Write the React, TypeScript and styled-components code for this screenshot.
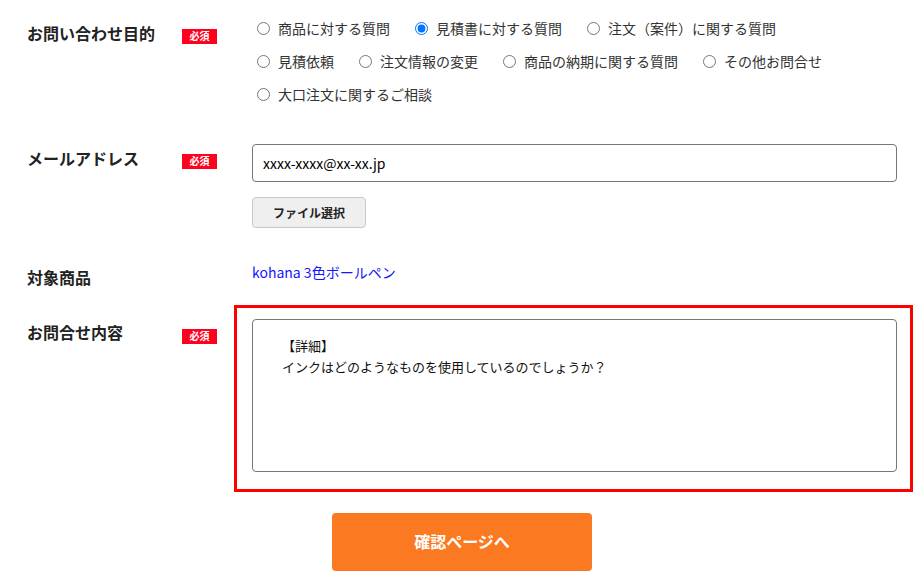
import React from "react";
import styled, { createGlobalStyle } from "styled-components";

const GlobalStyle = createGlobalStyle`
  html, body { margin: 0; padding: 0; background: #fff; }
  body {
    font-family: "Noto Sans CJK JP", "Noto Sans", sans-serif;
    color: #333;
  }
  * { box-sizing: border-box; }
`;

const Page = styled.form`
  width: 924px;
  padding-top: 12px;
  padding-bottom: 20px;
`;

const Row = styled.div<{ $top: number }>`
  display: grid;
  grid-template-columns: 155px 70px 645px;
  align-items: start;
  padding-left: 27px;
  margin-top: ${(p) => p.$top}px;
`;

const Label = styled.div<{ $offset: number }>`
  margin-top: ${(p) => p.$offset}px;
  font-size: 16px;
  line-height: 24px;
  font-weight: 700;
  color: #222;
  white-space: nowrap;
`;

const BadgeCell = styled.div<{ $offset: number }>`
  padding-top: ${(p) => p.$offset}px;
`;

const Badge = styled.span`
  display: flex;
  align-items: center;
  justify-content: center;
  width: 35px;
  height: 15px;
  padding-bottom: 1px;
  background: #ff001e;
  color: #fff;
  font-size: 10px;
  font-weight: 700;
  line-height: 1;
`;

const Field = styled.div`
  position: relative;
  display: flex;
  flex-direction: column;
  align-items: flex-start;
`;

const RadioGroup = styled.div`
  display: flex;
  flex-wrap: wrap;
  column-gap: 20px;
  width: 600px;
`;

const RadioOption = styled.label`
  display: inline-flex;
  align-items: center;
  height: 33px;
  padding-bottom: 1px;
  font-size: 14px;
  color: #333;
  cursor: pointer;
  white-space: nowrap;
`;

const RadioInput = styled.input.attrs({ type: "radio" })`
  width: 13px;
  height: 13px;
  margin: 1px 8px 0 5px;
`;

const TextInput = styled.input`
  width: 645px;
  height: 38px;
  padding: 0 10px 1px;
  border: 1px solid #767676;
  border-radius: 4px;
  font-family: inherit;
  font-size: 14px;
  color: #000;
  background: #fff;
`;

const FileButton = styled.button`
  margin-top: 15px;
  width: 114px;
  height: 31px;
  border: 1px solid #c9c9c9;
  border-radius: 4px;
  background: #efefef;
  font-family: inherit;
  font-size: 12px;
  font-weight: 700;
  color: #222;
  padding: 0 0 1px;
  cursor: pointer;
`;

const ProductLink = styled.a`
  font-size: 14px;
  line-height: 20px;
  color: #1515ff;
  text-decoration: none;
`;

const TextArea = styled.textarea`
  width: 645px;
  height: 153px;
  padding: 15px 20px 10px 29px;
  border: 1px solid #767676;
  border-radius: 4px;
  font-family: inherit;
  font-size: 13px;
  line-height: 21px;
  color: #111;
  resize: none;
  background: #fff;
`;

const Highlight = styled.div`
  position: absolute;
  top: -14px;
  left: -18px;
  right: -16px;
  bottom: -20px;
  border: 3px solid #ff0000;
  pointer-events: none;
`;

const Actions = styled.div`
  display: flex;
  justify-content: center;
  margin-top: 41px;
`;

const SubmitButton = styled.button`
  width: 260px;
  height: 58px;
  padding: 0 0 3px;
  border: none;
  border-radius: 4px;
  background: #fb7a21;
  color: #fff;
  font-family: inherit;
  font-size: 16px;
  font-weight: 700;
  cursor: pointer;
`;

const purposes = [
  "商品に対する質問",
  "見積書に対する質問",
  "注文（案件）に関する質問",
  "見積依頼",
  "注文情報の変更",
  "商品の納期に関する質問",
  "その他お問合せ",
  "大口注文に関するご相談",
];

export default function App() {
  return (
    <>
      <GlobalStyle />
      <Page onSubmit={(e) => e.preventDefault()}>
        <Row $top={0}>
          <Label $offset={9}>お問い合わせ目的</Label>
          <BadgeCell $offset={17}>
            <Badge>必須</Badge>
          </BadgeCell>
          <Field>
            <RadioGroup>
              {purposes.map((p, i) => (
                <RadioOption key={p}>
                  <RadioInput name="purpose" defaultChecked={i === 1} />
                  {p}
                </RadioOption>
              ))}
            </RadioGroup>
          </Field>
        </Row>

        <Row $top={33}>
          <Label $offset={2}>メールアドレス</Label>
          <BadgeCell $offset={10}>
            <Badge>必須</Badge>
          </BadgeCell>
          <Field>
            <TextInput type="text" defaultValue="xxxx-xxxx@xx-xx.jp" />
            <FileButton type="button">ファイル選択</FileButton>
          </Field>
        </Row>

        <Row $top={34}>
          <Label $offset={3}>対象商品</Label>
          <BadgeCell $offset={0} />
          <Field>
            <ProductLink href="#">kohana 3色ボールペン</ProductLink>
          </Field>
        </Row>

        <Row $top={30}>
          <Label $offset={1}>お問合せ内容</Label>
          <BadgeCell $offset={10}>
            <Badge>必須</Badge>
          </BadgeCell>
          <Field>
            <TextArea
              defaultValue={"【詳細】\nインクはどのようなものを使用しているのでしょうか？"}
            />
            <Highlight />
          </Field>
        </Row>

        <Actions>
          <SubmitButton type="submit">確認ページへ</SubmitButton>
        </Actions>
      </Page>
    </>
  );
}
